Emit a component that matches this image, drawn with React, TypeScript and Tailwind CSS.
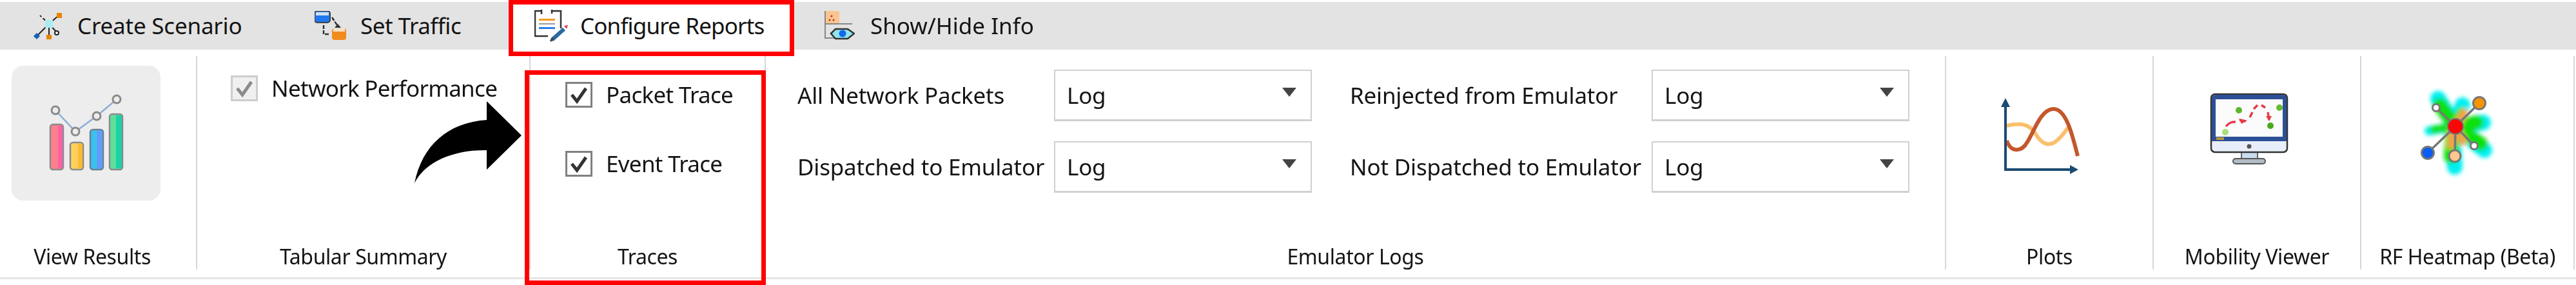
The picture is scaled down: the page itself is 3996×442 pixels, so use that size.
function CreateIcon() {
  return (
    <svg viewBox="0 0 44 44" className="w-[44px] h-[44px] shrink-0">
      <g stroke="#222" strokeWidth="2" fill="none">
        <path d="M24 19 L10 6" strokeDasharray="5 3" />
        <path d="M24 19 L39 6" />
        <path d="M24 19 L5 38" />
        <path d="M24 19 L24 38" />
        <path d="M24 19 L36 32" />
      </g>
      <rect x="18" y="13" width="12" height="12" fill="#a9ecf2" />
      <rect x="36" y="2" width="8" height="8" fill="#e88400" />
      <path d="M5 33 L10 38 L5 43 L0 38 Z" fill="#1560c0" />
      <rect x="20" y="36" width="8" height="7" fill="#e88400" />
      <circle cx="36" cy="33" r="3" fill="#fff" stroke="#222" strokeWidth="2" />
    </svg>
  );
}

function TrafficIcon() {
  return (
    <svg viewBox="0 0 49 46" className="w-[49px] h-[46px] shrink-0">
      <rect x="0" y="0" width="24" height="18" rx="4" fill="#1f78f0" stroke="#444" strokeWidth="2" />
      <rect x="2" y="2" width="20" height="5" fill="#cfe0ee" />
      <path d="M27 10 L35 22 M14 22 L14 36 L24 36" stroke="#333" strokeWidth="2.5" fill="none" strokeDasharray="6 2" />
      <path d="M31 26 L36 20 L41 26 Z" fill="#333" />
      <rect x="27" y="27" width="22" height="18" rx="4" fill="#f08c1e" />
      <rect x="29" y="27" width="18" height="5" fill="#f4e2c9" />
    </svg>
  );
}

function ReportIcon() {
  return (
    <svg viewBox="0 0 54 50" className="w-[54px] h-[50px] shrink-0">
      <path d="M12 2 L1 2 L1 41 L21 41 M41 29 L41 2 L27 2" stroke="#333" strokeWidth="2.5" fill="none" />
      <path d="M11 0 L11 7 M27 0 L27 6" stroke="#333" strokeWidth="2.5" />
      <rect x="7" y="14" width="25" height="3" fill="#f59a23" />
      <rect x="7" y="21" width="25" height="2" fill="#9a9a9a" />
      <rect x="7" y="27" width="25" height="3" fill="#2b7de9" />
      <path d="M27 47 L46 30" stroke="#2a6a9e" strokeWidth="6" />
      <path d="M25 49 L29 44" stroke="#444" strokeWidth="3" />
      <path d="M46 25 L52 24 L50 30 Z" fill="#e8384f" />
    </svg>
  );
}

function InfoIcon() {
  return (
    <svg viewBox="0 0 47 46" className="w-[47px] h-[46px] shrink-0">
      <rect x="2" y="0" width="21" height="21" fill="#fbc58f" />
      <path d="M1 0 L1 42 L24 42 M1 20 L43 20" stroke="#888" strokeWidth="2" fill="none" />
      <circle cx="11" cy="8" r="1.5" fill="#a33" />
      <circle cx="8" cy="14" r="1.5" fill="#a33" />
      <circle cx="14" cy="14" r="1.5" fill="#a33" />
      <path d="M10 35 L17 28 L36 28 L46 35 L36 43 L17 43 Z" fill="#8fe4ee" stroke="#333" strokeWidth="2.5" />
      <circle cx="28" cy="35" r="5.5" fill="#1268ee" />
    </svg>
  );
}

function ResultsIcon() {
  return (
    <svg viewBox="18 102 231 209" className="w-full h-full">
      <path d="M86 171 L117 204 L150 180 L181 154" stroke="#8aaed6" strokeWidth="2.5" fill="none" />
      <rect x="78" y="193" width="20" height="70" rx="4" fill="#ff7f8a" stroke="#8b8b8b" strokeWidth="2.5" />
      <rect x="90" y="195" width="7" height="66" fill="#f763a8" />
      <rect x="109" y="221" width="20" height="42" rx="4" fill="#ffd15c" stroke="#8b8b8b" strokeWidth="2.5" />
      <rect x="121" y="223" width="7" height="38" fill="#fbbd2e" />
      <rect x="140" y="201" width="20" height="62" rx="4" fill="#3bc1ee" stroke="#6d7f99" strokeWidth="2.5" />
      <rect x="150" y="203" width="9" height="58" fill="#5f9ef6" />
      <rect x="170" y="177" width="20" height="86" rx="4" fill="#5ee09b" stroke="#8b8b8b" strokeWidth="2.5" />
      <rect x="180" y="179" width="9" height="82" fill="#1fcfa8" />
      <g fill="#ececec" stroke="#8a8a8a" strokeWidth="3">
        <circle cx="86" cy="171" r="6" />
        <circle cx="117" cy="204" r="6" />
        <circle cx="150" cy="180" r="6" />
        <circle cx="181" cy="154" r="6" />
      </g>
    </svg>
  );
}

function PlotsIcon() {
  return (
    <svg viewBox="0 0 200 170" className="w-[200px] h-[170px]">
      <path d="M33 75 C55 70 68 72 78 88 C88 105 100 108 112 97 C120 90 125 82 128 78" stroke="#fbbf6b" strokeWidth="6" fill="none" />
      <path d="M33 98 C38 115 55 118 65 100 C75 85 85 50 105 49 C125 48 135 90 143 122" stroke="#c4572b" strokeWidth="6" fill="none" />
      <path d="M31 40 L31 143 L135 143" stroke="#1c4a73" strokeWidth="4" fill="none" />
      <path d="M31 32 L24 46 L38 46 Z M144 143 L131 136 L131 150 Z" fill="#1c4a73" />
    </svg>
  );
}

function MonitorIcon() {
  return (
    <svg viewBox="0 0 170 150" className="w-[170px] h-[150px]">
      <rect x="67" y="114" width="25" height="12" fill="#c9dcef" stroke="#666" strokeWidth="2" />
      <rect x="54" y="126" width="50" height="8" rx="4" fill="#b3bbc4" stroke="#555" strokeWidth="2" />
      <rect x="20" y="26" width="118" height="90" rx="6" fill="#e8eef9" stroke="#333" strokeWidth="2.5" />
      <path d="M21 33 Q21 27 27 27 L131 27 Q137 27 137 33 L137 99 L21 99 Z" fill="#2c4f96" />
      <rect x="27" y="34" width="104" height="58" fill="#fbfbfb" />
      <rect x="28" y="93" width="12" height="4" fill="#b8963f" />
      <circle cx="79" cy="107" r="3.5" fill="#555" />
      <circle cx="63" cy="51" r="5" fill="#5fb52c" />
      <circle cx="126" cy="47" r="5" fill="#66bb33" />
      <circle cx="112" cy="75" r="5" fill="#47a920" />
      <circle cx="42" cy="85" r="5" fill="#a8e07c" />
      <path d="M43 76 C48 70 52 69 58 69 M64 66 L74 68 M80 62 L84 54 M86 49 L92 43 M98 43 L104 47 M108 54 L110 66" stroke="#e53b48" strokeWidth="3.5" fill="none" />
      <path d="M63 64 L76 67 L67 72 Z M105 60 L114 60 L110 68 Z" fill="#e53b48" />
    </svg>
  );
}

function HeatmapIcon() {
  return (
    <svg viewBox="0 0 170 160" className="w-[170px] h-[160px]">
      <defs>
        <filter id="heat" x="-30%" y="-30%" width="160%" height="160%">
          <feGaussianBlur stdDeviation="3" />
        </filter>
      </defs>
      <g filter="url(#heat)" fill="none" strokeLinecap="round">
        <g stroke="#00f0f0" strokeWidth="24">
          <path d="M79 71 L52 28" />
          <path d="M79 71 L90 38" />
          <path d="M79 71 L38 78" strokeWidth="14" />
          <path d="M79 71 L122 65" />
          <path d="M79 71 L124 108" />
          <path d="M75 75 L78 134" />
        </g>
        <g stroke="#10e010" strokeWidth="22">
          <path d="M79 71 L55 38" />
          <path d="M79 71 L88 48" strokeWidth="14" />
          <path d="M79 71 L45 76" strokeWidth="12" />
          <path d="M79 71 L112 65" />
          <path d="M79 71 L118 98" />
          <path d="M75 75 L72 118" />
        </g>
        <g stroke="#f2a24a" strokeWidth="13">
          <path d="M79 71 L92 50" />
          <path d="M75 78 L72 100" />
          <path d="M82 78 L90 94" />
        </g>
      </g>
      <g stroke="#777" strokeWidth="3.5" fill="none">
        <path d="M79 71 L49 42 M79 71 L116 35 M79 71 L36 112 M79 71 L78 117 M79 71 L108 101" />
      </g>
      <circle cx="49" cy="42" r="5.5" fill="#fff" stroke="#777" strokeWidth="3" />
      <circle cx="116" cy="35" r="9.5" fill="#f79400" stroke="#777" strokeWidth="3" />
      <circle cx="36" cy="112" r="9.5" fill="#0a5cf5" stroke="#777" strokeWidth="3" />
      <circle cx="78" cy="117" r="9" fill="#ffc78f" stroke="#777" strokeWidth="3" />
      <circle cx="108" cy="101" r="5.5" fill="#fff" stroke="#777" strokeWidth="3" />
      <circle cx="79" cy="71" r="12" fill="#f90606" stroke="#777" strokeWidth="2" />
    </svg>
  );
}

function CheckBox({ disabled }: { disabled?: boolean }) {
  return (
    <div
      className={
        disabled
          ? "w-[42px] h-[40px] shrink-0 border-[3px] border-[#cdcdcd] bg-[#f0f0f0] flex items-center justify-center"
          : "w-[42px] h-[40px] shrink-0 border-[3px] border-[#808080] bg-white flex items-center justify-center"
      }
    >
      <svg viewBox="0 0 30 30" className="w-[30px] h-[30px]">
        <path
          d="M4 15 L12 25 L26 5"
          fill="none"
          stroke={disabled ? "#8c8c8c" : "#333"}
          strokeWidth="5"
        />
      </svg>
    </div>
  );
}

function LogSelect() {
  return (
    <div className="w-[400px] h-[80px] border-2 border-[#d0d0d0] border-b-[3px] bg-white flex items-center justify-between pl-[18px] pr-[22px]">
      <span>Log</span>
      <div className="w-0 h-0 border-x-[11px] border-x-transparent border-t-[14px] border-t-[#444] mb-[10px]"></div>
    </div>
  );
}

function Group({
  label,
  className,
  labelClass,
  children,
}: {
  label: string;
  className: string;
  labelClass?: string;
  children?: React.ReactNode;
}) {
  return (
    <div className={`${className} shrink-0 h-full flex flex-col border-r-2 border-[#d6d6d6]`}>
      <div className="flex-1">{children}</div>
      <div className={`h-[40px] flex items-center justify-center text-[32px] tracking-[-0.4px] ${labelClass ?? ""}`}>
        {label}
      </div>
    </div>
  );
}

export default function App() {
  return (
    <div className="relative w-[3996px] h-[442px] bg-white overflow-hidden text-[#141414] font-['Noto_Sans',sans-serif]">
      <div className="blur-[0.7px] pt-[3px]">
        <div className="h-[74px] bg-[#e3e3e3] flex items-center text-[35px]">
          <div className="w-[435px] h-full flex items-center pl-[52px] gap-[24px]">
            <CreateIcon />
            <span className="tracking-[-0.2px]">Create Scenario</span>
          </div>
          <div className="w-[354px] h-full flex items-center pl-[53px] gap-[22px]">
            <TrafficIcon />
            <span className="tracking-[-0.5px]">Set Traffic</span>
          </div>
          <div className="w-[443px] h-full flex items-center pl-[40px] gap-[17px] bg-white">
            <ReportIcon />
            <span className="tracking-[-0.85px]">Configure Reports</span>
          </div>
          <div className="h-full flex items-center pl-[47px] gap-[24px]">
            <InfoIcon />
            <span>Show/Hide Info</span>
          </div>
        </div>

        <div className="mt-[10px] h-[331px] flex text-[35px] leading-[40px] tracking-[-0.7px]">
          <Group label="View Results" className="w-[306px]" labelClass="pr-[18px]">
            <div className="ml-[18px] mt-[15px] w-[231px] h-[209px] rounded-[18px] bg-[#ededed]">
              <ResultsIcon />
            </div>
          </Group>
          <Group label="Tabular Summary" className="w-[517px]">
            <div className="pt-[30px] pl-[52px] flex items-center gap-[21px]">
              <CheckBox disabled />
              <span>Network Performance</span>
            </div>
          </Group>
          <Group label="Traces" className="w-[365px]">
            <div className="pt-[40px] pl-[54px] flex flex-col gap-[67px]">
              <div className="flex items-center gap-[21px]">
                <CheckBox />
                <span>Packet Trace</span>
              </div>
              <div className="flex items-center gap-[21px]">
                <CheckBox />
                <span>Event Trace</span>
              </div>
            </div>
          </Group>
          <Group label="Emulator Logs" className="w-[1831px]">
            <div className="pt-[21px] pl-[49px] grid grid-cols-[398px_399px_60px_468px_400px] gap-y-[31px] items-center tracking-[-0.2px]">
              <span>All Network Packets</span>
              <LogSelect />
              <span></span>
              <span>Reinjected from Emulator</span>
              <LogSelect />
              <span>Dispatched to Emulator</span>
              <LogSelect />
              <span></span>
              <span>Not Dispatched to Emulator</span>
              <LogSelect />
            </div>
          </Group>
          <Group label="Plots" className="w-[322px]">
            <div className="ml-[61px] mt-[33px]">
              <PlotsIcon />
            </div>
          </Group>
          <Group label="Mobility Viewer" className="w-[322px]">
            <div className="ml-[69px] mt-[33px]">
              <MonitorIcon />
            </div>
          </Group>
          <Group label="RF Heatmap (Beta)" className="w-[331px]">
            <div className="ml-[67px] mt-[38px]">
              <HeatmapIcon />
            </div>
          </Group>
        </div>

        <div className="mt-[12px] h-[3px] bg-[#e6e6e6]"></div>
      </div>

      {/* red highlights and the arrow sit over the ribbon, they stay sharp */}
      <div className="absolute left-[789px] top-0 w-[443px] h-[87px] border-[7px] border-[#ff0000]"></div>
      <div className="absolute left-[814px] top-[109px] w-[374px] h-[333px] border-[7px] border-[#ff0000]"></div>
      <svg viewBox="640 155 172 132" className="absolute left-[640px] top-[155px] w-[172px] h-[132px]">
        <path d="M643 284 C655 225 695 190 755 186 L755 157 L809 210 L755 263 L755 233 C705 232 660 250 643 284 Z" fill="#000" />
      </svg>
    </div>
  );
}
